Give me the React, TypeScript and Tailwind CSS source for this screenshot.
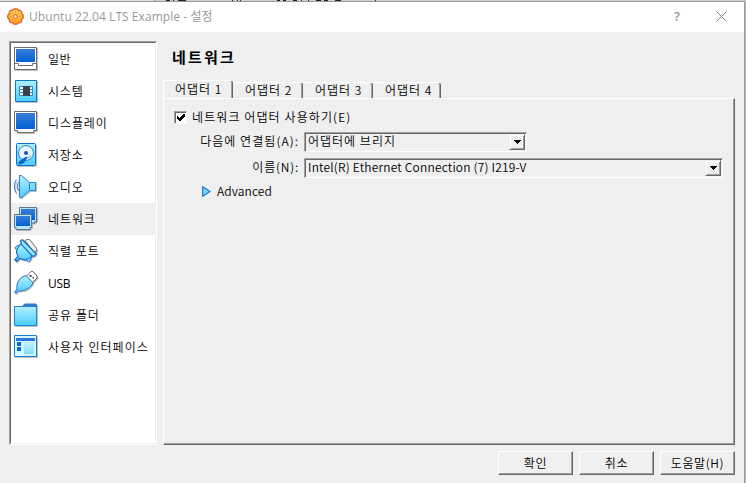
import type { ReactNode } from "react";

const KR = "font-['Noto_Sans_CJK_KR',sans-serif] font-[350]";
const UI = "font-['Open_Sans','Noto_Sans_CJK_KR',sans-serif]";

function Defs() {
  return (
    <svg width="0" height="0" className="absolute">
      <defs>
        <linearGradient id="cyan" x1="0" y1="0" x2="0" y2="1">
          <stop offset="0" stopColor="#b4f0ff" />
          <stop offset="1" stopColor="#48ccff" />
        </linearGradient>
        <linearGradient id="blue" x1="0" y1="0" x2="0" y2="1">
          <stop offset="0" stopColor="#3a7cd8" />
          <stop offset="1" stopColor="#0060d4" />
        </linearGradient>
        <linearGradient id="orange" x1="0" y1="0" x2="0" y2="1">
          <stop offset="0" stopColor="#ffd060" />
          <stop offset="1" stopColor="#ffa320" />
        </linearGradient>
      </defs>
    </svg>
  );
}

function Icon({ children }: { children: ReactNode }) {
  return (
    <svg width="24" height="24" viewBox="0 0 24 24" fill="none" className="shrink-0 drop-shadow-[1px_1px_0_#00000040]">
      {children}
    </svg>
  );
}

const items: { label: string; icon: ReactNode; track: string }[] = [
  {
    label: "일반",
    track: "tracking-[0.5px]",
    icon: (
      <>
        <path d="M.5.5h22v22H.5z" fill="#fff" stroke="#6c6c6c" />
        <path d="M2 2h19v13H2z" fill="url(#blue)" />
        <path d="M1 16.500h3.500v2h14v-2H22" stroke="#6c6c6c" />
      </>
    ),
  },
  {
    label: "시스템",
    track: "tracking-[0.8px]",
    icon: (
      <>
        <path d="M1.500 1.500h21v21h-21z" fill="url(#cyan)" stroke="#0a78d0" />
        <path d="M5.500 7.500h13v9h-13z" fill="#e8f8ff" stroke="#3b8cc4" />
        <path d="M5 10.500h14M5 13.500h14" stroke="#3b8cc4" />
        <path d="M9 7h7v10H9z" fill="#3c424c" />
      </>
    ),
  },
  {
    label: "디스플레이",
    track: "tracking-[0.9px]",
    icon: (
      <>
        <path d="M.5.5h22v19h-3v2h-16v-2h-3z" fill="#fff" stroke="#6c6c6c" />
        <path d="M2 2h19v16H2z" fill="url(#blue)" />
      </>
    ),
  },
  {
    label: "저장소",
    track: "tracking-[0.8px]",
    icon: (
      <>
        <rect x="2.500" y=".5" width="19" height="22" rx="1" fill="url(#cyan)" stroke="#1070d0" />
        <circle cx="12" cy="10" r="7.500" fill="#e4f5ff" stroke="#3b80c8" />
        <circle cx="12" cy="10" r="2" fill="#1d55b0" />
        <path d="m14 13.500-3.500 1L5.500 18 4 21l2 .5 4-1.500 2-3z" fill="#0666d2" />
        <path d="m13.500 15 4-2" stroke="#7ab" />
      </>
    ),
  },
  {
    label: "오디오",
    track: "tracking-[0.8px]",
    icon: (
      <>
        <path d="M5.500.5h2l8 7h6v8h-6l-8 7h-2z" fill="url(#cyan)" stroke="#2f7fc8" />
        <path d="M15.500 7.500v8" stroke="#2f7fc8" />
        <path d="M5 7c-2.500 1.500-2.500 7.500 0 9M3 4.500C-.5 7-.5 16 3 18.500" stroke="#2876c4" />
      </>
    ),
  },
  {
    label: "네트워크",
    track: "tracking-[0.9px]",
    icon: (
      <>
        <path d="M5.500.5h17v14h-1.500v1.500H7v-1.500H5.500z" fill="#b9e4fa" stroke="#4f7899" />
        <path d="M7 2h14v11H7z" fill="url(#blue)" />
        <path d="M.5 7.500h17v13H16v2H2v-2H.5z" fill="#b9e4fa" stroke="#4f7899" />
        <path d="M2 9h14v10H2z" fill="url(#blue)" />
      </>
    ),
  },
  {
    label: "직렬 포트",
    track: "tracking-[0.9px]",
    icon: (
      <>
        <path d="M11 1.500 13 .5H15.500L22.500 9.500V12.500L20 13z" fill="#f4f4f4" stroke="#777" />
        <path d="M8 4.500 3.500 7.500 2.500 13.500 4 17.500.8 20.500 2.500 22.500 5.500 19.500 11 21 17 19 18.500 15z" fill="url(#cyan)" stroke="#1a6fca" strokeWidth="1.200" />
        <path d="M.8 9 3.500 6.200 5 7.700 2.500 10.500zM12.500 21 15.500 18.500 17 20 14.500 22.800z" fill="#8adfff" stroke="#1a6fca" />
        <path d="M6.500 1.500 8.500.8 22.300 15 19.500 17.500 17.800 16.500 7.500 5.500z" fill="#9ce6ff" stroke="#1a6fca" strokeWidth="1.200" />
      </>
    ),
  },
  {
    label: "USB",
    track: "font-normal tracking-[-0.3px]",
    icon: (
      <>
        <path d="m12 5.500 5-5h2l4 4.500v2l-5 5z" fill="#fff" stroke="#666" />
        <path d="M15.500 4h2v2h-2zM18.500 6h1.500v1.500h-1.500z" fill="#444" />
        <path d="m12 4.500 7 7.500c-2.500 5-7 7.500-12.500 8L3.500 20 2 22.500.5 21 3 18c-1-7 3-12 9-13.500z" fill="url(#cyan)" stroke="#2574c4" />
      </>
    ),
  },
  {
    label: "공유 폴더",
    track: "tracking-[0.9px]",
    icon: (
      <>
        <path d="M.5 3.500h22v19H.5z" fill="url(#cyan)" stroke="#1888d8" />
        <path d="M8 4 9 2l2-1.500h11L23 2v2z" fill="#2f78cc" />
      </>
    ),
  },
  {
    label: "사용자 인터페이스",
    track: "tracking-[1.05px]",
    icon: (
      <>
        <path d="M.5.5h22v21H.5z" fill="#d4f6ff" stroke="#1580d6" />
        <path d="M2 3h19v3H2z" fill="#2c78d8" />
        <path d="M3 7h4v4H3zM3 12h4v4H3z" fill="#0868d4" />
        <path d="M10 7h10v12H10z" fill="url(#cyan)" opacity=".6" />
      </>
    ),
  },
];

function Arrow() {
  return (
    <span className="flex h-4 w-4 items-center justify-center border border-t-[#efefef] border-l-[#efefef] border-r-[#696969] border-b-[#696969] bg-[#efefef] shadow-[inset_1px_1px_0_#fff,inset_-1px_-1px_0_#a0a0a0]">
      <svg width="7" height="4" shapeRendering="crispEdges">
        <path d="M0 0h7v1H6v1H5v1H4v1H3V3H2V2H1V1H0z" fill="#000" />
      </svg>
    </span>
  );
}

function Combo({ text, className }: { text: string; className: string }) {
  return (
    <div className={`flex h-[20px] items-start justify-between border border-t-[#a0a0a0] border-l-[#a0a0a0] border-r-white border-b-white pt-px pr-px pl-[3px] shadow-[inset_1px_1px_0_#696969] ${className}`}>
      <span className="leading-[14px] whitespace-nowrap">{text}</span>
      <Arrow />
    </div>
  );
}

function Button({ children }: { children: ReactNode }) {
  return (
    <button className="h-6 w-[75px] border border-t-white border-l-white border-r-[#696969] border-b-[#696969] text-center leading-[20px] tracking-[0.6px] whitespace-nowrap shadow-[inset_-1px_-1px_0_#a0a0a0]">
      {children}
    </button>
  );
}

export default function App() {
  return (
    <div className={`flex h-[483px] w-[746px] flex-col overflow-hidden bg-[#efefef] text-[12px] text-black ${KR}`}>
      <Defs />
      <div className="flex h-px shrink-0 bg-[#cfcfcf]">
        <div className="w-[155px] border-r border-[#999] bg-[#e2e2e2]" />
        <div className="ml-[11px] w-[4px] bg-[#222]" />
        <div className="ml-[3px] w-px bg-[#222]" />
        <div className="ml-[4px] w-[8px] bg-[#222]" />
        <div className="ml-[46px] w-px bg-[#222]" />
        <div className="ml-[4px] w-px bg-[#222]" />
        <div className="ml-[2px] w-px bg-[#222]" />
        <div className="ml-[36px] w-[3px] bg-[#222]" />
        <div className="ml-[3px] w-[3px] bg-[#222]" />
        <div className="ml-[7px] w-[4px] bg-[#222]" />
        <div className="ml-[4px] w-px bg-[#222]" />
        <div className="ml-[6px] w-px bg-[#222]" />
        <div className="ml-[7px] w-[5px] bg-[#222]" />
        <div className="ml-[3px] w-[4px] bg-[#222]" />
        <div className="ml-[7px] w-[6px] bg-[#222]" />
        <div className="ml-[34px] w-px bg-[#222]" />
      </div>
      <div className="flex min-h-0 flex-1">
        <div className="flex flex-1 flex-col border-t border-[#9a9a9a]">
          <header className={`flex h-[30px] items-center bg-white text-[#999] ${UI}`}>
            <svg width="17" height="17" viewBox="0 0 16 16" className="mb-[2px] ml-[7px]">
              <path d="M6 1.200Q8 .2 10 1.200L10.800 2.200 12.700 2.300Q14 3.300 13.700 5.200L15 6.500Q15.600 8 15 9.500L13.700 10.800Q14 12.700 12.700 13.700L10.800 13.800 10 14.800Q8 15.800 6 14.800L5.200 13.800 3.300 13.700Q2 12.700 2.300 10.800L1 9.500Q.4 8 1 6.500L2.300 5.200Q2 3.300 3.300 2.300L5.200 2.200z" fill="url(#orange)" stroke="#e0642b" strokeWidth="1.300" />
              <circle cx="8" cy="8" r="1.700" fill="#fff" stroke="#d9622b" />
              <path d="M8 3v2M8 11v2M3 8h2M11 8h2M4.500 4.500l1.200 1.200M10.300 10.300l1.200 1.200M4.500 11.500l1.200-1.200M10.300 5.700l1.200-1.200" stroke="#f08a28" strokeWidth=".8" />
            </svg>
            <h1 className="ml-[5px] text-[12px] font-normal tracking-[0.06px] whitespace-nowrap">Ubuntu 22.04 LTS Example - 설정</h1>
            <span className="mb-px ml-auto text-[13px] font-semibold text-[#999]">?</span>
            <svg width="11" height="11" viewBox="0 0 11 11" className="mr-[17px] mb-px ml-[36px]">
              <path d="m.5.5 10 10m0-10-10 10" stroke="#888" />
            </svg>
          </header>
          <div className="flex pt-[9px] pl-[9px]">
            <nav className="h-[404px] w-[148px] border border-t-[#a0a0a0] border-l-[#a0a0a0] border-r-white border-b-white">
              <div className="h-full border border-t-[#696969] border-l-[#696969] border-r-[#efefef] border-b-[#efefef] bg-white">
                {items.map((it) => (
                  <div key={it.label} className={`flex h-8 items-center gap-[10px] pl-[3px] ${it.label === "네트워크" ? "bg-[#efefef]" : ""} ${UI}`}>
                    <Icon>{it.icon}</Icon>
                    <span className={`pt-[2px] whitespace-nowrap ${it.track}`}>{it.label}</span>
                  </div>
                ))}
              </div>
            </nav>
            <main className="ml-[6px] w-[572px]">
              <h2 className="h-[39px] pt-[6px] pl-[9px] text-[15px] leading-[20px] font-bold tracking-[2.2px]">네트워크</h2>
              <div className="flex h-[18px] items-end tracking-[1px]">
                <div className="h-[18px] w-[70px] rounded-t-[2px] border-t border-l border-white pl-[11px] leading-[16px] shadow-[inset_-1px_0_0_#696969,inset_-2px_0_0_#a0a0a0]">어댑터 1</div>
                <div className="h-[16px] w-[70px] rounded-t-[2px] border-t border-white pl-[12px] leading-[14px] shadow-[inset_-1px_0_0_#696969,inset_-2px_0_0_#a0a0a0]">어댑터 2</div>
                <div className="h-[16px] w-[70px] rounded-t-[2px] border-t border-white pl-[12px] leading-[14px] shadow-[inset_-1px_0_0_#696969,inset_-2px_0_0_#a0a0a0]">어댑터 3</div>
                <div className="h-[16px] w-[68px] rounded-t-[2px] border-t border-white pl-[12px] leading-[14px] shadow-[inset_-1px_0_0_#696969,inset_-2px_0_0_#a0a0a0]">어댑터 4</div>
              </div>
              <section className="h-[347px] border border-t-white border-l-white border-r-[#696969] border-b-[#696969] pl-[10px] shadow-[inset_-1px_-1px_0_#a0a0a0]">
                <label className="flex h-[33px] items-center gap-[5px] pt-[4px]">
                  <span className="flex h-[13px] w-[13px] items-center justify-center border border-t-[#a0a0a0] border-l-[#a0a0a0] border-r-white border-b-white bg-white shadow-[inset_1px_1px_0_#696969]">
                    <svg width="8" height="8" shapeRendering="crispEdges">
                      <path d="M0 2h1v1h1v1h1V3h1V2h1V1h1V0h2v3H7v1H6v1H5v1H4v1H2V6H1V5H0z" />
                    </svg>
                  </span>
                  <span className="-mt-px tracking-[1.1px]">네트워크 어댑터 사용하기(E)</span>
                </label>
                <div className="flex h-[26px] items-start">
                  <span className="w-[125px] text-right leading-[17px] tracking-[1.050px] whitespace-nowrap">다음에 연결됨(A):</span>
                  <Combo text="어댑터에 브리지" className="ml-[5px] w-[223px] tracking-[1px]" />
                </div>
                <div className="flex h-[26px] items-start">
                  <span className="w-[125px] text-right leading-[17px] tracking-[0.8px] whitespace-nowrap">이름(N):</span>
                  <Combo text="Intel(R) Ethernet Connection (7) I219-V" className="ml-[5px] w-[419px] tracking-[0.19px]" />
                </div>
                <div className="flex items-center gap-[6px] pl-[28px] leading-[14px]">
                  <svg width="9" height="11" viewBox="0 0 9 11">
                    <path d="M.7.700 8 5.500.7 10.300z" fill="#7cd8ff" stroke="#1874d8" strokeWidth="1.200" />
                  </svg>
                  <span className="tracking-[0.1px]">Advanced</span>
                </div>
              </section>
            </main>
          </div>
          <footer className="mt-[6px] flex gap-[6px] pl-[498px]">
            <Button>확인</Button>
            <Button>취소</Button>
            <Button>도움말(H)</Button>
          </footer>
        </div>
        <div className="w-[2px] border-l border-[#9a9a9a] bg-[#bdbdbd]" />
      </div>
    </div>
  );
}
